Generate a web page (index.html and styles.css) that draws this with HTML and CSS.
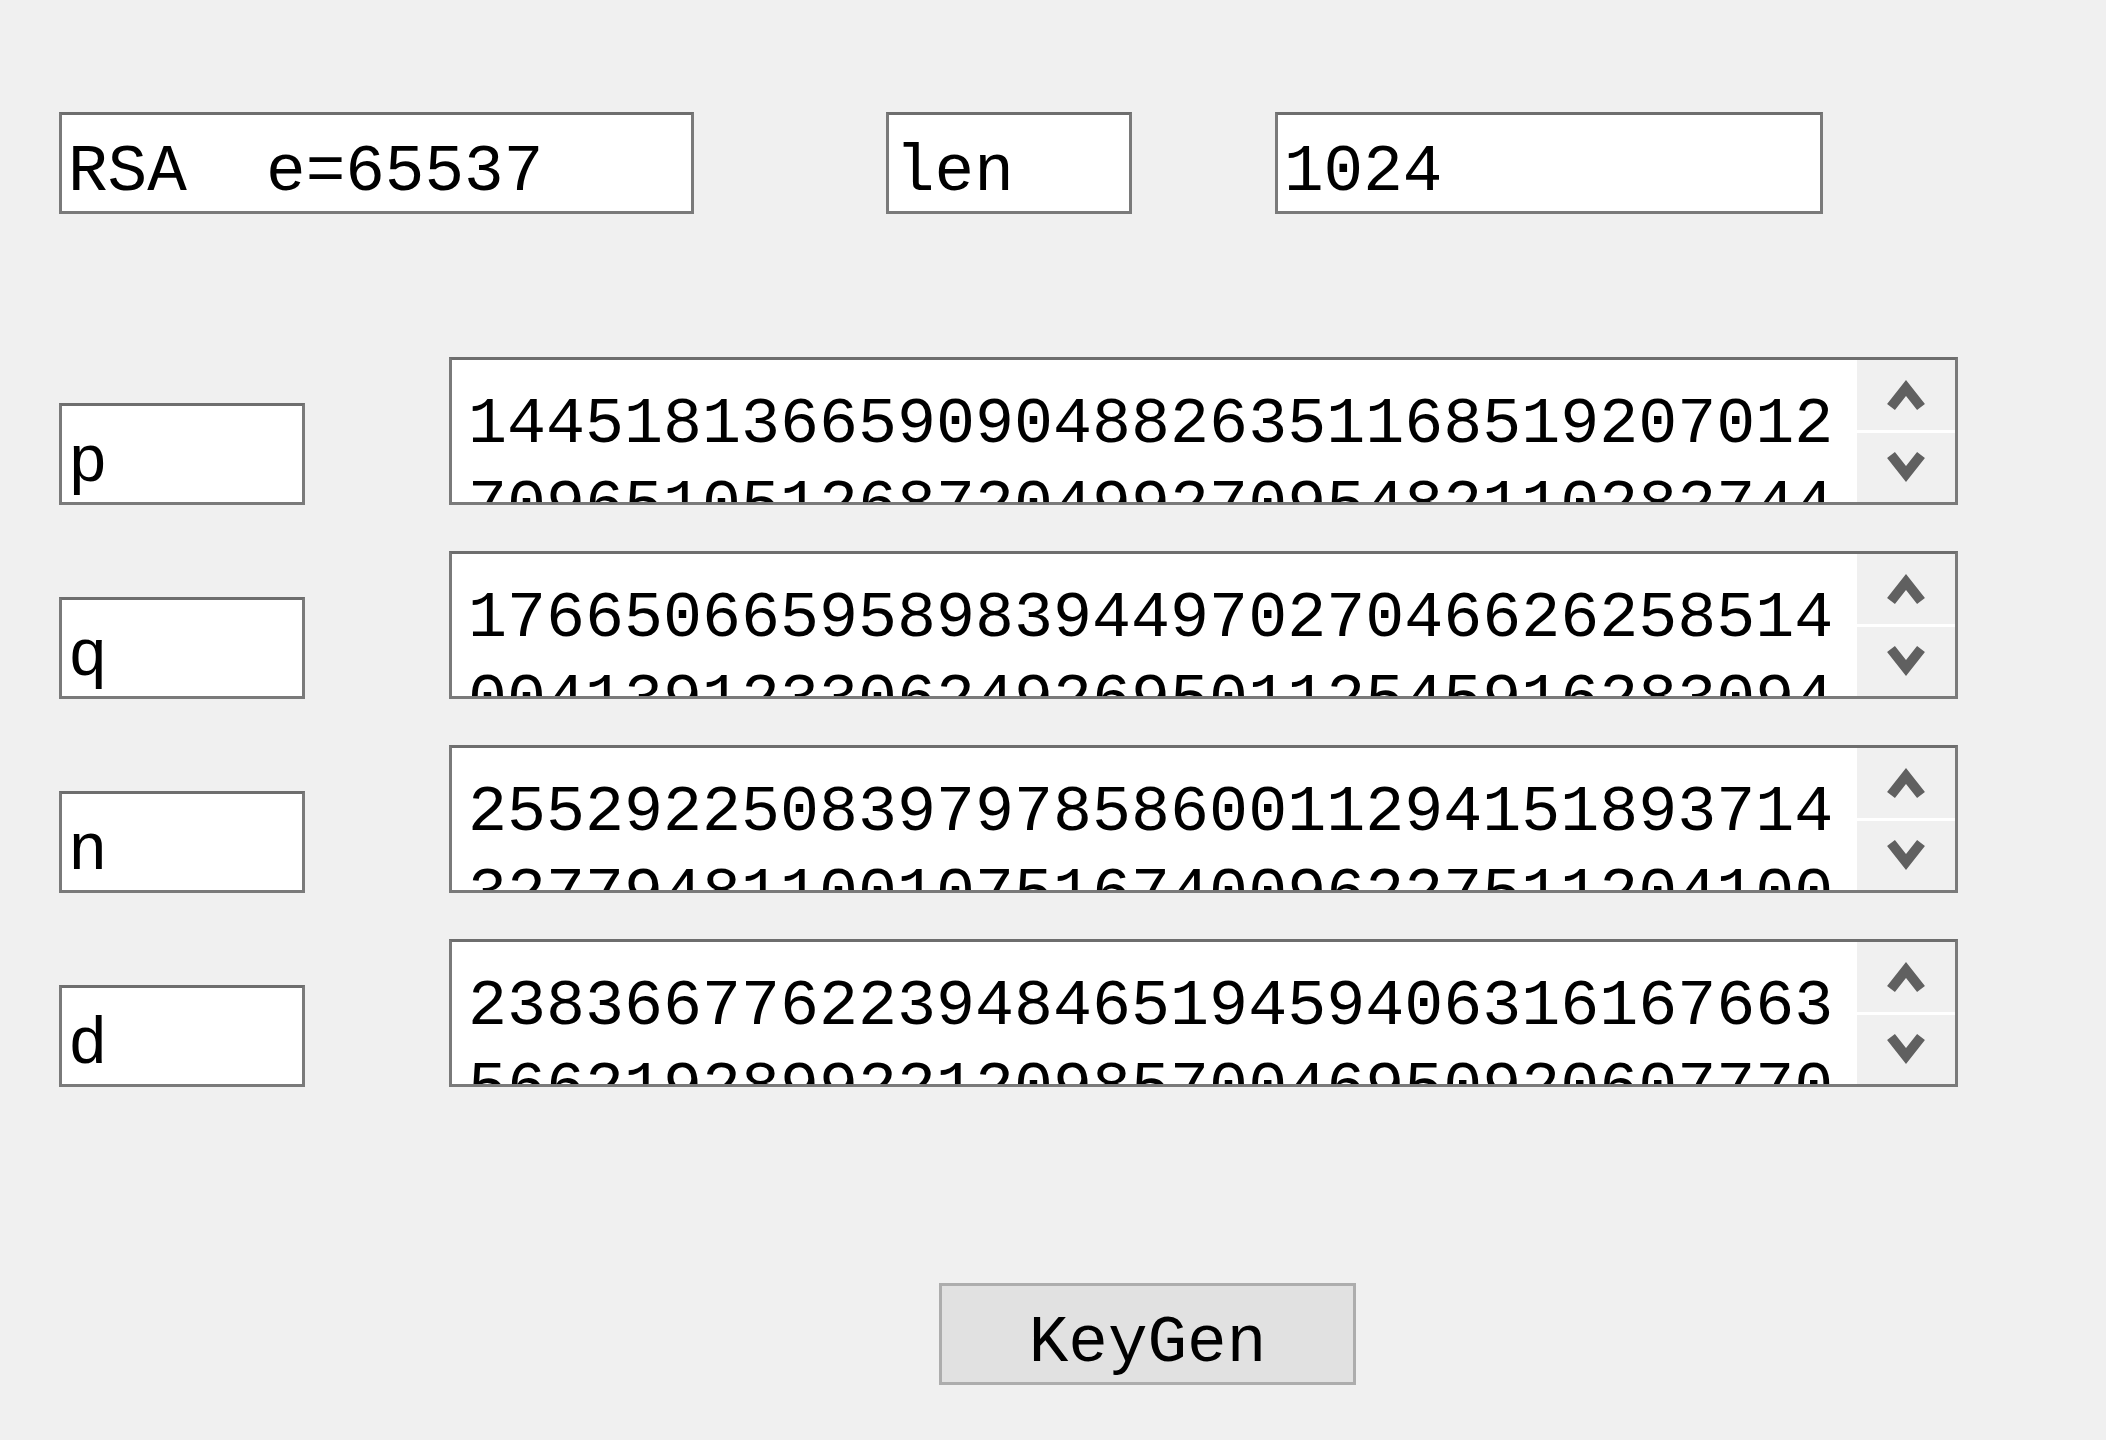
FILE: index.html
```html
<!DOCTYPE html>
<html>
<head>
<meta charset="utf-8">
<title>RSA KeyGen</title>
<link rel="stylesheet" href="styles.css">
</head>
<body>
<div class="dialog">
  <div class="toprow">
    <div class="edit w-alg">RSA  e=65537</div>
    <div class="edit w-len gap-len">len</div>
    <div class="edit w-bits gap-bits">1024</div>
  </div>

  <div class="rows">
    <div class="row">
      <div class="edit w-label">p</div>
      <div class="area">
        <div class="area-text">
          <div class="line">14451813665909048826351168519207012</div>
          <div class="line">70965105126872049927095482110282744</div>
        </div>
        <div class="scroll">
          <div class="sbtn"><svg class="chev" viewBox="0 0 40 34"><polyline points="5,29 20,10 35,29"/></svg></div>
          <div class="sep"></div>
          <div class="sbtn"><svg class="chev" viewBox="0 0 40 34"><polyline points="5,5 20,24 35,5"/></svg></div>
        </div>
      </div>
    </div>
    <div class="row">
      <div class="edit w-label">q</div>
      <div class="area">
        <div class="area-text">
          <div class="line">17665066595898394497027046626258514</div>
          <div class="line">00413912330624926950112545916283094</div>
        </div>
        <div class="scroll">
          <div class="sbtn"><svg class="chev" viewBox="0 0 40 34"><polyline points="5,29 20,10 35,29"/></svg></div>
          <div class="sep"></div>
          <div class="sbtn"><svg class="chev" viewBox="0 0 40 34"><polyline points="5,5 20,24 35,5"/></svg></div>
        </div>
      </div>
    </div>
    <div class="row">
      <div class="edit w-label">n</div>
      <div class="area">
        <div class="area-text">
          <div class="line">25529225083979785860011294151893714</div>
          <div class="line">32779481100107516740096227511204100</div>
        </div>
        <div class="scroll">
          <div class="sbtn"><svg class="chev" viewBox="0 0 40 34"><polyline points="5,29 20,10 35,29"/></svg></div>
          <div class="sep"></div>
          <div class="sbtn"><svg class="chev" viewBox="0 0 40 34"><polyline points="5,5 20,24 35,5"/></svg></div>
        </div>
      </div>
    </div>
    <div class="row">
      <div class="edit w-label">d</div>
      <div class="area">
        <div class="area-text">
          <div class="line">23836677622394846519459406316167663</div>
          <div class="line">56621928992212098570046950920607770</div>
        </div>
        <div class="scroll">
          <div class="sbtn"><svg class="chev" viewBox="0 0 40 34"><polyline points="5,29 20,10 35,29"/></svg></div>
          <div class="sep"></div>
          <div class="sbtn"><svg class="chev" viewBox="0 0 40 34"><polyline points="5,5 20,24 35,5"/></svg></div>
        </div>
      </div>
    </div>
  </div>

  <div class="button">KeyGen</div>
</div>
</body>
</html>
```

FILE: styles.css
```css
html, body {
  margin: 0;
  padding: 0;
  background: #f0f0f0;
}

body {
  font-family: "Liberation Mono", "DejaVu Sans Mono", monospace;
  color: #000;
  width: 2106px;
  height: 1440px;
  overflow: hidden;
}

.dialog {
  display: flex;
  flex-direction: column;
  align-items: flex-start;
  padding: 112px 0 0 59px;
}

.toprow {
  display: flex;
}

.edit {
  box-sizing: border-box;
  height: 102px;
  background: #fff;
  border: 3px solid #7a7a7a;
  border-top-color: #6e6e6e;
  padding: 20px 0 0 6px;
  font-size: 66px;
  line-height: 75px;
  white-space: pre;
  overflow: hidden;
}

.w-alg { width: 635px; }
.w-len { width: 246px; }
.w-bits { width: 548px; }
.w-label { width: 246px; }

.gap-len { margin-left: 192px; }
.gap-bits { margin-left: 143px; }

.rows {
  display: flex;
  flex-direction: column;
  gap: 46px;
  margin-top: 143px;
}

.row {
  display: flex;
  align-items: flex-end;
  gap: 144px;
}

.area {
  box-sizing: border-box;
  width: 1509px;
  height: 148px;
  border: 3px solid #7a7a7a;
  border-top-color: #6e6e6e;
  display: flex;
  background: #fff;
}

.area-text {
  flex: 1;
  overflow: hidden;
  padding: 24px 0 0 16px;
  font-size: 65px;
  line-height: 82px;
  white-space: nowrap;
}

.line {
  height: 82px;
}

.scroll {
  width: 98px;
  display: flex;
  flex-direction: column;
  background: #f0f0f0;
}

.sbtn {
  flex: 1;
  display: flex;
  align-items: center;
  justify-content: center;
}

.sep {
  height: 3px;
  background: #fff;
}

.chev {
  width: 40px;
  height: 34px;
}

.chev polyline {
  fill: none;
  stroke: #606060;
  stroke-width: 10;
  stroke-linejoin: miter;
  stroke-linecap: butt;
}

.button {
  box-sizing: border-box;
  width: 417px;
  height: 102px;
  margin-top: 196px;
  margin-left: 880px;
  background: #e1e1e1;
  border: 3px solid #adadad;
  padding-top: 20px;
  font-size: 66px;
  line-height: 75px;
  text-align: center;
}
```
